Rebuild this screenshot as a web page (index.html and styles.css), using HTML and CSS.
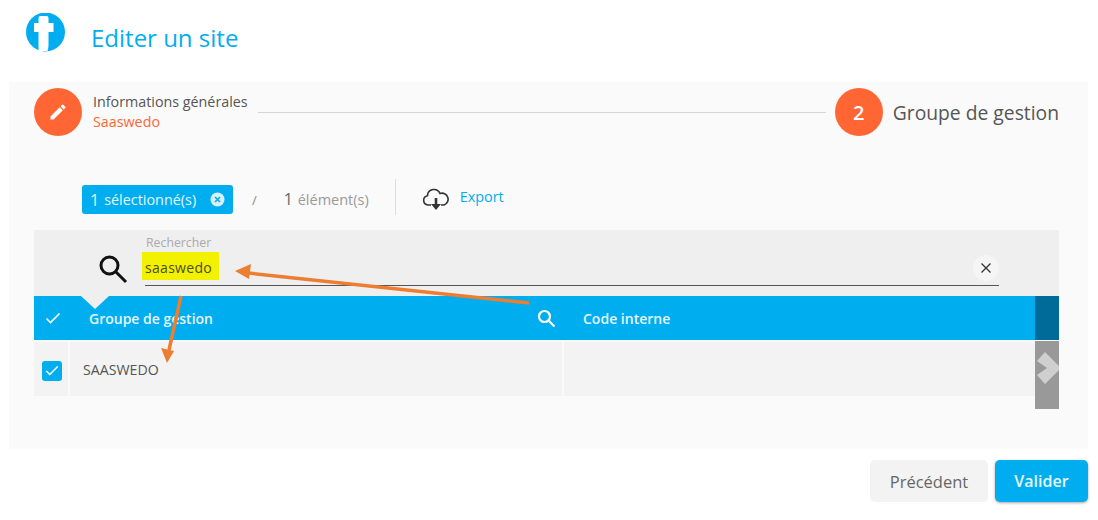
FILE: index.html
```html
<!DOCTYPE html>
<html>
  <head>
    <meta charset="utf-8">
    <title>Editer un site</title>
    <link rel="stylesheet" href="styles.css">
  </head>
  <body>
    <div class="page">
      <header class="top">
        <svg class="logo" width="40" height="40" viewBox="0 0 40 40">
          <circle cx="20.500" cy="19" r="19.500" fill="#00aeef"></circle>
          <path d="M13.500 5q0-2 2-2h6q2 0 2 2v5h5v9h-5v13q0 3-1 6h-9v-19h-4.500v-9h4.500z" fill="#fff"></path>
        </svg>
        <h1 class="title">Editer un site</h1>
      </header>

      <main class="panel">
        <div class="steps">
          <div class="step_circle">
            <svg width="20" height="20" viewBox="0 0 24 24" fill="#fff">
              <path d="M3 17.250V21h3.750L17.810 9.940l-3.750-3.750L3 17.250zM20.710 7.040a1 1 0 0 0 0-1.410l-2.340-2.340a1 1 0 0 0-1.410 0l-1.830 1.830 3.750 3.750 1.830-1.830z"></path>
            </svg>
          </div>
          <div class="step_text">
            <span>Informations générales</span>
            <span class="step_sub">Saaswedo</span>
          </div>
          <div class="step_line"></div>
          <div class="step_circle">2</div>
          <div class="step_name">Groupe de gestion</div>
        </div>

        <div class="toolbar">
          <div class="badge">
            <span class="badge_num">1</span> sélectionné(s)
            <svg class="badge_x" width="15" height="15" viewBox="0 0 15 15">
              <circle cx="7.500" cy="7.500" r="7" fill="#d6f1fc"></circle>
              <path d="M5 5l5 5M10 5l-5 5" stroke="#00aeef" stroke-width="1.600"></path>
            </svg>
          </div>
          <span class="slash">/</span>
          <span class="count"><span class="count_num">1</span> élément(s)</span>
          <div class="divider"></div>
          <svg class="cloud" width="28" height="23" viewBox="0 0 28 23" fill="none" stroke="#333" stroke-width="1.600">
            <path d="M9 17H6a4.700 4.700 0 0 1-.5-9.300 6.500 6.500 0 0 1 12.500-2.200 5.800 5.800 0 0 1 4 11.500H19"></path>
            <path d="M14 10v7" stroke-width="2.600"></path>
            <path d="M9 16h10l-5 6z" fill="#333" stroke="none"></path>
          </svg>
          <span class="export">Export</span>
        </div>

        <div class="search">
          <svg class="search_icon" width="30" height="30" viewBox="0 0 30 30" fill="none" stroke="#111" stroke-width="3">
            <circle cx="11.500" cy="11.500" r="8.500"></circle>
            <path d="M18 18l10 10"></path>
          </svg>
          <div class="search_field">
            <div class="search_label">Rechercher</div>
            <div class="search_value"><mark class="hl">saaswedo</mark></div>
          </div>
          <div class="search_clear">
            <svg width="10" height="10" viewBox="0 0 10 10" stroke="#333" stroke-width="1.300">
              <path d="M.5.500l9 9M9.500.500l-9 9"></path>
            </svg>
          </div>
        </div>

        <div class="grid">
          <div class="grid_head">
            <div class="head_check">
              <svg width="16" height="12" viewBox="0 0 16 12" fill="none" stroke="#fff" stroke-width="1.600">
                <path d="M1.500 6.500l4 4 9-9"></path>
              </svg>
            </div>
            <div class="head_col head_first">
              <span>Groupe de gestion</span>
              <svg width="19" height="19" viewBox="0 0 19 19" fill="none" stroke="#fff" stroke-width="2.200">
                <circle cx="7.500" cy="7.500" r="5.500"></circle>
                <path d="M11.500 11.500l6 6"></path>
              </svg>
            </div>
            <div class="head_col head_second">Code interne</div>
            <div class="head_end"></div>
          </div>
          <div class="grid_row">
            <div class="cell_check">
              <div class="checkbox">
                <svg width="14" height="11" viewBox="0 0 16 12" fill="none" stroke="#fff" stroke-width="1.800">
                  <path d="M1.500 6.500l4 4 9-9"></path>
                </svg>
              </div>
            </div>
            <div class="cell cell_first">SAASWEDO</div>
            <div class="cell cell_second"></div>
            <div class="cell_end"></div>
          </div>
          <div class="head_notch"></div>
          <div class="scroll_next">
            <svg width="22" height="32" viewBox="0 0 22 32" fill="#cfcfcf">
              <path d="M0 9l8-9 14 14v4L8 32l-8-9 10-7z"></path>
            </svg>
          </div>
        </div>
      </main>

      <footer class="actions">
        <button class="btn btn_prev">Précédent</button>
        <button class="btn btn_ok">Valider</button>
      </footer>

      <!-- annotation arrows drawn on top of the shot -->
      <svg class="arrows" width="1098" height="520" viewBox="0 0 1098 520">
        <path d="M529 303L248 273" stroke="#ed7d31" stroke-width="3.500"></path>
        <path d="M235 271l16-7-2 15z" fill="#ed7d31"></path>
        <path d="M181 296L169 350" stroke="#ed7d31" stroke-width="3.500"></path>
        <path d="M167 363l-6-15 13 3z" fill="#ed7d31"></path>
      </svg>
    </div>
  </body>
</html>
```

FILE: styles.css
```css
html, body {
  margin: 0;
  padding: 0;
  background: white;
  color: #555;

  font-family: "Open Sans", sans-serif;
}

.page {
  position: relative;
  width: 1098px;
  height: 520px;
  overflow: hidden;
}

.top {
  height: 82px;
  box-sizing: border-box;
  padding: 13px 0 0 25px;

  display: flex;
  align-items: flex-start;
  gap: 26px;
}

.title {
  margin: 7px 0 0;
  font-size: 24px;
  line-height: 36px;
  font-weight: 400;
  color: #00aeef;
}

.panel {
  margin-left: 9px;
  width: 1079px;
  height: 367px;
  box-sizing: border-box;
  padding: 6px 29px 0 25px;

  background: #fafafa;
}

.steps {
  display: flex;
  align-items: center;
  height: 48px;
}

.step_circle {
  width: 48px;
  height: 48px;
  border-radius: 50%;
  background: #ff6633;
  color: white;
  font-size: 20px;
  font-weight: 600;

  display: flex;
  align-items: center;
  justify-content: center;
  flex-shrink: 0;
}

.step_text {
  margin-left: 11px;
  font-size: 14.300px;
  line-height: 20px;

  display: flex;
  flex-direction: column;
}

.step_sub {
  color: #ff6633;
}

.step_line {
  flex: 1;
  height: 1px;
  margin: 0 9px 0 10px;
  background: #d5d5d5;
}

.step_name {
  margin-left: 10px;
  font-size: 19.300px;
}

.toolbar {
  margin: 43px 0 0 48px;
  height: 36px;

  display: flex;
  align-items: center;
}

.badge {
  width: 151px;
  height: 29px;
  box-sizing: border-box;
  padding-left: 8px;
  margin-top: 5px;
  border-radius: 3px;
  background: #00aeef;
  color: #e4f6fd;
  font-size: 14.400px;

  display: flex;
  align-items: center;
  gap: 5px;
}

.badge_num {
  font-size: 16px;
}

.badge_x {
  margin-left: 9px;
}

.slash {
  margin: 5px 0 0 19px;
  font-size: 13px;
  color: #888;
}

.count {
  margin: 4px 0 0 27px;
  font-size: 14.500px;
  color: #999;
}

.count_num {
  font-size: 16px;
  color: #666;
  margin-right: 1px;
}

.divider {
  width: 1px;
  height: 36px;
  margin-left: 26px;
  background: #ddd;
}

.cloud {
  margin: 5px 0 0 26px;
}

.export {
  margin: -2px 0 0 10px;
  font-size: 14.400px;
  color: #00aeef;
}

.search {
  margin-top: 15px;
  height: 66px;
  box-sizing: border-box;
  padding: 8px 60px 0 64px;
  background: #efefef;

  display: flex;
  position: relative;
}

.search_icon {
  margin: 16px 17px 0 0;
}

.search_field {
  flex: 1;
  height: 47px;
  border-bottom: 1px solid #555;
}

.search_label {
  height: 14px;
  margin-left: 1px;
  font-size: 12.300px;
  line-height: 9px;
  color: #aaa;
}

.search_value {
  font-size: 14px;
  line-height: 28px;
}

.hl {
  display: inline-block;
  margin-left: -3px;
  width: 77px;
  height: 28px;
  padding-left: 3px;
  box-sizing: border-box;
  background: #f2f200;
  color: #4c4c20;
  letter-spacing: 0.300px;
  line-height: 32px;
}

.search_clear {
  position: absolute;
  left: 939px;
  top: 25px;
  width: 26px;
  height: 26px;
  border-radius: 50%;
  background: #f5f5f5;

  display: flex;
  align-items: center;
  justify-content: center;
}

.grid {
  position: relative;
}

.grid_head {
  height: 44px;
  background: #00aeef;
  color: #e4f6fd;
  font-size: 14px;
  font-weight: 600;

  display: flex;
  align-items: center;
}

.head_check {
  width: 36px;
  padding-left: 11px;
  box-sizing: border-box;

  display: flex;
  align-items: center;
}

.head_col {
  height: 100%;
  box-sizing: border-box;

  display: flex;
  align-items: center;
  justify-content: space-between;
}

.head_first {
  width: 494px;
  padding: 0 8px 0 19px;
}

.head_second {
  flex: 1;
  padding-left: 19px;
}

.head_end {
  width: 24px;
  height: 100%;
  background: #006b99;
}

.head_notch {
  position: absolute;
  left: 47px;
  top: 0;
  width: 0;
  height: 0;
  border-left: 14px solid transparent;
  border-right: 14px solid transparent;
  border-top: 13px solid #efefef;
}

.grid_row {
  margin-top: 2px;
  height: 54px;

  display: flex;
  gap: 2px;
}

.cell_check {
  width: 34px;
  padding: 3px 0 0 2px;
  box-sizing: border-box;
  background: #f3f3f3;

  display: flex;
  align-items: center;
  justify-content: center;
}

.checkbox {
  width: 20px;
  height: 20px;
  border-radius: 3px;
  background: #00aeef;

  display: flex;
  align-items: center;
  justify-content: center;
}

.cell {
  box-sizing: border-box;
  background: #f3f3f3;
  font-size: 14.200px;

  display: flex;
  align-items: center;
}

.cell_first {
  width: 492px;
  padding-left: 13px;
}

.cell_second {
  flex: 1;
}

.cell_end {
  width: 22px;
}

.scroll_next {
  position: absolute;
  right: 0;
  top: 45px;
  width: 24px;
  height: 68px;
  padding: 11px 0 0 2px;
  box-sizing: border-box;
  background: #999;
}

.actions {
  margin: 11px 10px 0 0;

  display: flex;
  justify-content: flex-end;
  gap: 7px;
}

.btn {
  height: 42px;
  border: 0;
  border-radius: 5px;
  font-family: "Open Sans", sans-serif;
  font-size: 16.500px;
}

.btn_prev {
  width: 118px;
  background: #f3f3f3;
  color: #666;
}

.btn_ok {
  width: 93px;
  background: #00aeef;
  color: #e4f6fd;
  font-size: 16px;
  font-weight: 600;
  box-shadow: 0 1px 3px rgba(0, 0, 0, 0.35);
}

.arrows {
  position: absolute;
  left: 0;
  top: 0;
  pointer-events: none;
}
```
